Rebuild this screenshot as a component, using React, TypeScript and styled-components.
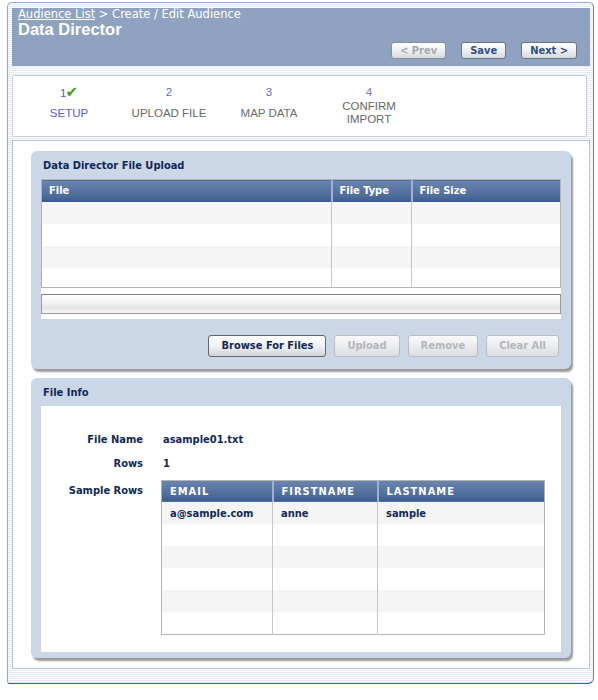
import styled, { createGlobalStyle } from "styled-components";

const GlobalStyle = createGlobalStyle`
  html, body {
    margin: 0;
    padding: 0;
    background: #fff;
  }
  body {
    font-family: "DejaVu Sans", Verdana, sans-serif;
  }
`;

const stripes = `repeating-linear-gradient(180deg, #ffffff 0px, #ffffff 1px, #e3eaf5 1px, #e3eaf5 2px)`;

const Frame = styled.div`
  box-sizing: border-box;
  margin: 2px 0 0 7px;
  width: 587px;
  height: 682px;
  border: 1px solid #8fa8cf;
  border-bottom-color: #2c5fa8;
  border-right-color: #5a82bd;
  border-radius: 5px 5px 6px 3px;
  background: ${stripes};
  padding: 5px 3px 14px 4px;
  display: flex;
  flex-direction: column;
`;

const HeaderBar = styled.div`
  height: 58px;
  box-sizing: border-box;
  background: #8fa3c1;
  padding: 0 13px 0 6px;
  display: flex;
  flex-direction: column;
`;

const Breadcrumb = styled.div`
  font-family: "DejaVu Sans", Verdana, sans-serif;
  font-size: 11.5px;
  line-height: 13px;
  color: #fff;

  a {
    color: #fff;
    text-decoration: underline;
  }
`;

const PageTitle = styled.h1`
  margin: 0;
  font-family: "Liberation Sans", Arial, sans-serif;
  font-weight: bold;
  font-size: 16.5px;
  line-height: 17px;
  color: #fff;
`;

const HeaderActions = styled.div`
  display: flex;
  justify-content: flex-end;
  gap: 15px;
  margin-top: 4px;
`;

const NavButton = styled.button<{ $disabled?: boolean }>`
  box-sizing: border-box;
  height: 17px;
  padding: 0 8px;
  border: 1px solid ${(p) => (p.$disabled ? "#8a8f98" : "#6f7680")};
  border-radius: 3px;
  background: linear-gradient(#ffffff, #eceef1 55%, #d4d8de);
  font-family: "DejaVu Sans Condensed", "DejaVu Sans", sans-serif;
  font-weight: bold;
  font-size: 11px;
  line-height: 15px;
  color: ${(p) => (p.$disabled ? "#a6a9ae" : "#2f4f7f")};
  cursor: ${(p) => (p.$disabled ? "default" : "pointer")};
`;

const StepsBox = styled.div`
  margin: 9px 3px 0 0;
  height: 62px;
  box-sizing: border-box;
  background: #fff;
  border: 1px solid #c9ced6;
  border-radius: 2px;
  display: flex;
  padding: 9px 0 0 6px;
`;

const Step = styled.div`
  width: 100px;
  display: flex;
  flex-direction: column;
  align-items: center;
  font-family: "Liberation Sans", Arial, sans-serif;
  font-size: 11.5px;
`;

const StepNumber = styled.div<{ $color: string }>`
  height: 14px;
  line-height: 14px;
  color: ${(p) => p.$color};
`;

const Check = styled.span`
  color: #3f9a25;
  font-family: "DejaVu Sans", sans-serif;
  font-size: 15px;
  font-weight: bold;
  margin-left: -1px;
`;

const StepLabel = styled.div<{ $color: string }>`
  height: 28px;
  display: flex;
  align-items: center;
  text-align: center;
  line-height: 13px;
  white-space: pre-line;
  color: ${(p) => p.$color};
`;

const ContentBox = styled.div`
  flex: 1;
  margin-top: 3px;
  background: #fff;
  border: 1px solid #b9c5d6;
  padding: 10px 18px 0 18px;
  display: flex;
  flex-direction: column;
  gap: 9px;
`;

const Panel = styled.section<{ $bottom?: number }>`
  background: #cbd7e6;
  border-radius: 6px;
  box-shadow: 2px 3px 2px rgba(0, 0, 0, 0.4);
  padding: 0 10px ${(p) => p.$bottom ?? 12}px 10px;
`;

const PanelTitle = styled.h2`
  margin: 0;
  height: 28px;
  line-height: 29px;
  padding-left: 2px;
  font-family: "DejaVu Sans Condensed", "DejaVu Sans", sans-serif;
  font-weight: bold;
  font-size: 11px;
  color: #0f2857;
`;

const UploadArea = styled.div`
  background: #fff;
  padding-bottom: 5px;
`;

const GridTable = styled.table`
  border-collapse: collapse;
  width: 100%;
  table-layout: fixed;
  font-family: "DejaVu Sans Condensed", "DejaVu Sans", sans-serif;
  font-size: 11px;
  border: 1px solid #b4b4b4;

  th {
    height: 22px;
    box-sizing: border-box;
    padding: 0 0 0 7px;
    text-align: left;
    font-weight: bold;
    color: #fff;
    background: linear-gradient(#6a84ad, #5470a0 60%, #3b5b8c);
    border-left: 2px solid #9fb1cb;
  }
  th:first-child {
    border-left: none;
  }

  td {
    height: 22px;
    padding: 0 0 0 7px;
    border-left: 1px solid #c8c8c8;
    font-weight: bold;
    color: #0f2857;
  }
  td:first-child {
    border-left: none;
  }

  tbody tr:nth-child(odd) td {
    background: #f5f5f5;
  }
  tbody tr:nth-child(even) td {
    background: #fff;
  }
`;

const UploadTable = styled(GridTable)`
  tbody tr:last-child td {
    height: 19px;
  }
`;

const SampleTable = styled(GridTable)`
  width: 384px;
  th {
    letter-spacing: 1px;
    padding-left: 8px;
  }
  td {
    padding-left: 8px;
  }
`;

const ProgressBar = styled.div`
  margin-top: 6px;
  height: 20px;
  box-sizing: border-box;
  border: 1px solid #9a9a9a;
  border-top-color: #7e7e7e;
  background: linear-gradient(#ffffff, #f3f3f3 40%, #e6e6e6 70%, #f6f6f6);
`;

const ButtonRow = styled.div`
  display: flex;
  justify-content: flex-end;
  gap: 8px;
  margin-top: 16px;
  padding-right: 2px;
`;

const ActionButton = styled.button<{ $disabled?: boolean }>`
  box-sizing: border-box;
  height: 22px;
  padding: 0 12px;
  border: 1px solid ${(p) => (p.$disabled ? "#b9bcc2" : "#5f6670")};
  border-radius: 3px;
  background: ${(p) =>
    p.$disabled
      ? "linear-gradient(#f9f9fa, #e8eaed 60%, #d9dce0)"
      : "linear-gradient(#ffffff, #eef0f2 55%, #cfd3d8)"};
  font-family: "DejaVu Sans Condensed", "DejaVu Sans", sans-serif;
  font-weight: bold;
  font-size: 11px;
  color: ${(p) => (p.$disabled ? "#b3b6ba" : "#0f2857")};
  cursor: ${(p) => (p.$disabled ? "default" : "pointer")};
`;

const InfoArea = styled.div`
  background: #fff;
  padding: 22px 0 17px 0;
  display: grid;
  grid-template-columns: 102px 1fr;
  column-gap: 18px;
  font-family: "DejaVu Sans Condensed", "DejaVu Sans", sans-serif;
  font-size: 11px;
  font-weight: bold;
  color: #0f2857;
`;

const InfoLabel = styled.div<{ $sample?: boolean }>`
  text-align: right;
  line-height: ${(p) => (p.$sample ? 22 : 24)}px;
  margin-top: ${(p) => (p.$sample ? 4 : 0)}px;
`;

const InfoValue = styled.div`
  line-height: 24px;
  padding-left: 2px;
`;

const SampleCell = styled.div`
  margin-top: 4px;
`;

const steps = [
  { num: "1", label: "SETUP", numColor: "#5560cf", labelColor: "#5560cf", done: true },
  { num: "2", label: "UPLOAD FILE", numColor: "#5a6dcf", labelColor: "#686868" },
  { num: "3", label: "MAP DATA", numColor: "#5a6dcf", labelColor: "#687070" },
  { num: "4", label: "CONFIRM\nIMPORT", numColor: "#8a72c0", labelColor: "#686868" },
];

const uploadRows = [0, 1, 2, 3];
const sampleRows = [
  ["a@sample.com", "anne", "sample"],
  ["", "", ""],
  ["", "", ""],
  ["", "", ""],
  ["", "", ""],
  ["", "", ""],
];

export default function App() {
  return (
    <>
      <GlobalStyle />
      <Frame>
        <HeaderBar>
          <Breadcrumb>
            <a href="#">Audience List</a> &gt; Create / Edit Audience
          </Breadcrumb>
          <PageTitle>Data Director</PageTitle>
          <HeaderActions>
            <NavButton $disabled>&lt; Prev</NavButton>
            <NavButton>Save</NavButton>
            <NavButton>Next &gt;</NavButton>
          </HeaderActions>
        </HeaderBar>

        <StepsBox>
          {steps.map((s) => (
            <Step key={s.num}>
              <StepNumber $color={s.numColor}>
                {s.num}
                {s.done && <Check>✔</Check>}
              </StepNumber>
              <StepLabel $color={s.labelColor}>
                <span>{s.label}</span>
              </StepLabel>
            </Step>
          ))}
        </StepsBox>

        <ContentBox>
          <Panel>
            <PanelTitle>Data Director File Upload</PanelTitle>
            <UploadArea>
              <UploadTable>
                <colgroup>
                  <col style={{ width: 290 }} />
                  <col style={{ width: 80 }} />
                  <col />
                </colgroup>
                <thead>
                  <tr>
                    <th>File</th>
                    <th>File Type</th>
                    <th>File Size</th>
                  </tr>
                </thead>
                <tbody>
                  {uploadRows.map((r) => (
                    <tr key={r}>
                      <td />
                      <td />
                      <td />
                    </tr>
                  ))}
                </tbody>
              </UploadTable>
              <ProgressBar />
            </UploadArea>
            <ButtonRow>
              <ActionButton>Browse For Files</ActionButton>
              <ActionButton $disabled>Upload</ActionButton>
              <ActionButton $disabled>Remove</ActionButton>
              <ActionButton $disabled>Clear All</ActionButton>
            </ButtonRow>
          </Panel>

          <Panel $bottom={6}>
            <PanelTitle>File Info</PanelTitle>
            <InfoArea>
              <InfoLabel>File Name</InfoLabel>
              <InfoValue>asample01.txt</InfoValue>
              <InfoLabel>Rows</InfoLabel>
              <InfoValue>1</InfoValue>
              <InfoLabel $sample>Sample Rows</InfoLabel>
              <SampleCell>
                <SampleTable>
                  <colgroup>
                    <col style={{ width: 111 }} />
                    <col style={{ width: 105 }} />
                    <col />
                  </colgroup>
                  <thead>
                    <tr>
                      <th>EMAIL</th>
                      <th>FIRSTNAME</th>
                      <th>LASTNAME</th>
                    </tr>
                  </thead>
                  <tbody>
                    {sampleRows.map((row, i) => (
                      <tr key={i}>
                        {row.map((c, j) => (
                          <td key={j}>{c}</td>
                        ))}
                      </tr>
                    ))}
                  </tbody>
                </SampleTable>
              </SampleCell>
            </InfoArea>
          </Panel>
        </ContentBox>
      </Frame>
    </>
  );
}
